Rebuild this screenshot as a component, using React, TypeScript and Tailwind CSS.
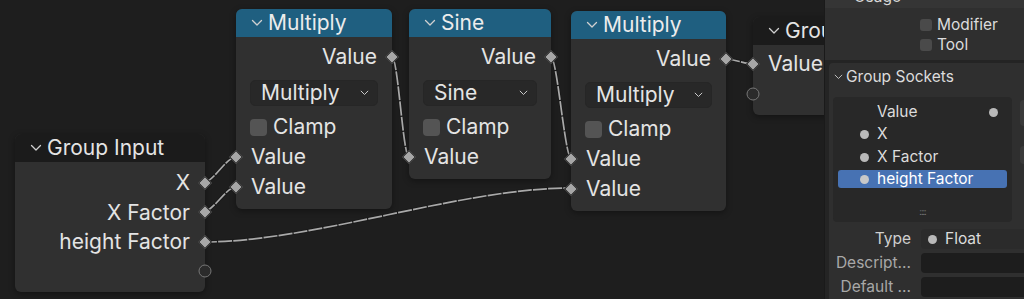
import type React from "react";

type Link = { x1: number; y1: number; x2: number; y2: number };

const links: Link[] = [
  { x1: 203, y1: 183, x2: 236, y2: 157 },
  { x1: 203, y1: 212, x2: 236, y2: 187 },
  { x1: 203, y1: 242, x2: 571, y2: 188 },
  { x1: 392, y1: 57, x2: 409, y2: 157 },
  { x1: 551, y1: 57, x2: 571, y2: 158 },
  { x1: 726, y1: 59, x2: 753, y2: 64 },
];

function linkPath(l: Link) {
  const d = Math.max(Math.abs(l.x2 - l.x1) * 0.3, 6);
  return `M ${l.x1} ${l.y1} C ${l.x1 + d} ${l.y1}, ${l.x2 - d} ${l.y2}, ${l.x2} ${l.y2}`;
}

function Chevron({ className = "" }: { className?: string }) {
  return (
    <svg viewBox="0 0 12 8" className={className} fill="none">
      <polyline points="1.5,1.5 6,6 10.5,1.5" stroke="currentColor" strokeWidth="1.3" strokeLinecap="round" strokeLinejoin="round" />
    </svg>
  );
}

function Diamond({ side }: { side: "left" | "right" }) {
  return (
    <span
      className={`absolute top-1/2 w-[10px] h-[10px] -translate-y-1/2 rotate-45 bg-[#a7a7a7] border border-[#1c1c1c] ${
        side === "left" ? "left-0 -translate-x-1/2" : "right-0 translate-x-1/2"
      }`}
    />
  );
}

function Ring({ side }: { side: "left" | "right" }) {
  return (
    <span
      className={`absolute top-1/2 w-[13px] h-[13px] -translate-y-1/2 rounded-full border-[1.5px] border-[#777] bg-[#2b2b2b] ${
        side === "left" ? "left-0 -translate-x-1/2" : "right-0 translate-x-1/2"
      }`}
    />
  );
}

function Row({
  children,
  socket,
  align = "left",
  h = "h-[30px]",
}: {
  children?: React.ReactNode;
  socket?: React.ReactNode;
  align?: "left" | "right";
  h?: string;
}) {
  return (
    <div className={`relative flex items-center ${h} ${align === "right" ? "justify-end pr-[15px]" : "pl-[15px]"}`}>
      <span className="leading-normal whitespace-nowrap">{children}</span>
      {socket}
    </div>
  );
}

function Node({
  pos,
  title,
  blue,
  children,
}: {
  pos: string;
  title: string;
  blue?: boolean;
  children: React.ReactNode;
}) {
  return (
    <div className={`absolute ${pos} rounded-[6px] bg-[#303030] text-[#e4e4e4] shadow-[0_2px_6px_rgba(0,0,0,0.35)]`}>
      <div
        className={`h-[28px] flex items-center gap-[5px] pl-[15px] rounded-t-[6px] ${
          blue ? "bg-[#1f5f80] text-[#ececec]" : "bg-[#1b1b1b]"
        }`}
      >
        <Chevron className="w-[12px] h-[8px] shrink-0 text-[#d0d0d0]" />
        <span className="leading-normal whitespace-nowrap">{title}</span>
      </div>
      {children}
    </div>
  );
}

function Dropdown({ label }: { label: string }) {
  return (
    <div className="mx-[14px] mt-[8px] h-[26px] rounded-[5px] bg-[#282828] border border-[#262626] flex items-center justify-between pl-[10px] pr-[8px]">
      <span className="leading-normal">{label}</span>
      <Chevron className="w-[9px] h-[6px] text-[#cfcfcf]" />
    </div>
  );
}

function Clamp() {
  return (
    <div className="mt-[6px] h-[30px] flex items-center gap-[6px] pl-[14px]">
      <span className="w-[17px] h-[17px] rounded-[4px] bg-[#545454]" />
      <span className="leading-normal">Clamp</span>
    </div>
  );
}

function Canvas() {
  return (
    <div className="relative flex-1 h-full overflow-hidden bg-[#1e1e1e] text-[21px] leading-none">
      <svg className="absolute inset-0 w-full h-full pointer-events-none" fill="none">
        {links.map((l, i) => (
          <g key={i}>
            <path d={linkPath(l)} stroke="#1a1a1a" strokeWidth="3.5" />
            <path d={linkPath(l)} stroke="#a9a9a9" strokeWidth="1.7" strokeDasharray="14 1.2" />
          </g>
        ))}
      </svg>

      <Node pos="left-[15px] top-[134px] w-[190px]" title="Group Input">
        <div className="pt-[6px] pb-[6px]">
          <Row align="right" h="h-[29.5px]" socket={<Diamond side="right" />}>X</Row>
          <Row align="right" h="h-[29.5px]" socket={<Diamond side="right" />}>X Factor</Row>
          <Row align="right" h="h-[29.5px]" socket={<Diamond side="right" />}>height Factor</Row>
          <Row align="right" h="h-[29.5px]" socket={<Ring side="right" />} />
        </div>
      </Node>

      <Node pos="left-[236px] top-[9px] w-[156px]" title="Multiply" blue>
        <div className="pt-[5px] pb-[7px]">
          <Row align="right" socket={<Diamond side="right" />}>Value</Row>
          <Dropdown label="Multiply" />
          <Clamp />
          <Row socket={<Diamond side="left" />}>Value</Row>
          <Row socket={<Diamond side="left" />}>Value</Row>
        </div>
      </Node>

      <Node pos="left-[409px] top-[9px] w-[142px]" title="Sine" blue>
        <div className="pt-[5px] pb-[7px]">
          <Row align="right" socket={<Diamond side="right" />}>Value</Row>
          <Dropdown label="Sine" />
          <Clamp />
          <Row socket={<Diamond side="left" />}>Value</Row>
        </div>
      </Node>

      <Node pos="left-[571px] top-[11px] w-[155px]" title="Multiply" blue>
        <div className="pt-[5px] pb-[7px]">
          <Row align="right" socket={<Diamond side="right" />}>Value</Row>
          <Dropdown label="Multiply" />
          <Clamp />
          <Row socket={<Diamond side="left" />}>Value</Row>
          <Row socket={<Diamond side="left" />}>Value</Row>
        </div>
      </Node>

      <Node pos="left-[753px] top-[17px] w-[160px]" title="Group Output">
        <div className="pt-[4px] pb-[6px]">
          <Row socket={<Diamond side="left" />}>Value</Row>
          <Row socket={<Ring side="left" />} />
        </div>
      </Node>
    </div>
  );
}

function Dot({ className = "" }: { className?: string }) {
  return <span className={`w-[9px] h-[9px] shrink-0 rounded-full bg-[#b9b9b9] ${className}`} />;
}

function SocketItem({ label, selected }: { label: string; selected?: boolean }) {
  return (
    <div
      className={`h-[18px] mx-[5px] flex items-center gap-[8px] pl-[22px] rounded-[3px] ${
        selected ? "bg-[#4772b3] text-white" : "text-[#dcdcdc]"
      }`}
    >
      <Dot className={selected ? "bg-[#c8c8c8]" : ""} />
      <span className="leading-normal">{label}</span>
    </div>
  );
}

function PropRow({ label, dim, children, field }: { label: string; dim?: boolean; children?: React.ReactNode; field: string }) {
  return (
    <div className="flex items-center h-[20px] gap-[10px]">
      <span className={`w-[82px] shrink-0 text-right whitespace-nowrap leading-normal ${dim ? "text-[#a8a8a8]" : "text-[#cfcfcf]"}`}>
        {label}
      </span>
      <div className={`flex-1 h-[20px] rounded-l-[4px] flex items-center gap-[8px] pl-[7px] ${field}`}>{children}</div>
    </div>
  );
}

function Sidebar() {
  return (
    <div className="w-[200px] shrink-0 h-full flex flex-col bg-[#242424] text-[15.5px] leading-none text-[#dcdcdc] border-l border-[#1a1a1a]">
      <div className="bg-[#2f2f2f] h-[60px] flex flex-col">
        <div className="h-[8px] bg-[#353535] overflow-hidden relative">
          <span className="absolute left-[29px] -top-[11px] text-[#d8d8d8]">Usage</span>
        </div>
        <div className="pl-[95px] pt-[10px] flex flex-col gap-[6px]">
          <div className="flex items-center gap-[5px] h-[14px]">
            <span className="w-[12px] h-[12px] rounded-[3px] bg-[#4a4a4a]" />
            <span className="leading-normal">Modifier</span>
          </div>
          <div className="flex items-center gap-[5px] h-[14px]">
            <span className="w-[12px] h-[12px] rounded-[3px] bg-[#4a4a4a]" />
            <span className="leading-normal">Tool</span>
          </div>
        </div>
      </div>
      <div className="mt-[3px] ml-[4px] flex-1 bg-[#2f2f2f] rounded-tl-[4px] flex flex-col">
        <div className="h-[27px] pt-[1px] flex items-center gap-[3px] pl-[5px]">
          <Chevron className="w-[9px] h-[6px] text-[#bdbdbd]" />
          <span className="leading-normal">Group Sockets</span>
        </div>
        <div className="flex gap-[8px] pl-[4px] pt-[7px]">
          <div className="w-[179px] shrink-0 h-[125px] rounded-[4px] bg-[#282828] flex flex-col pt-[6px]">
            <div className="h-[18px] mx-[5px] flex items-center justify-between pl-[39px] pr-[9px] text-[#dcdcdc]">
              <span className="leading-normal">Value</span>
              <Dot />
            </div>
            <div className="h-[4px]" />
            <SocketItem label="X" />
            <div className="h-[5px]" />
            <SocketItem label="X Factor" />
            <div className="h-[4px]" />
            <SocketItem label="height Factor" selected />
            <div className="flex-1 flex items-center justify-center">
              <span className="text-[9px] text-[#777] tracking-[-1px] pt-[12px]">::::</span>
            </div>
          </div>
          <div className="flex flex-col gap-[20px] pt-[3px]">
            <span className="w-[20px] h-[26px] rounded-l-[4px] bg-[#3a3a3a]" />
            <span className="w-[20px] h-[18px] rounded-l-[4px] bg-[#3a3a3a]" />
          </div>
        </div>
        <div className="flex flex-col gap-[4px] pt-[7px]">
          <PropRow label="Type" field="bg-[#2b2b2b]">
            <Dot />
            <span className="leading-normal">Float</span>
          </PropRow>
          <PropRow label="Descript..." dim field="bg-[#1d1d1d]" />
          <PropRow label="Default ..." dim field="bg-[#1d1d1d]" />
        </div>
      </div>
    </div>
  );
}

export default function App() {
  return (
    <div className="w-[1024px] h-[299px] flex overflow-hidden font-['Inter',sans-serif] select-none">
      <Canvas />
      <Sidebar />
    </div>
  );
}
